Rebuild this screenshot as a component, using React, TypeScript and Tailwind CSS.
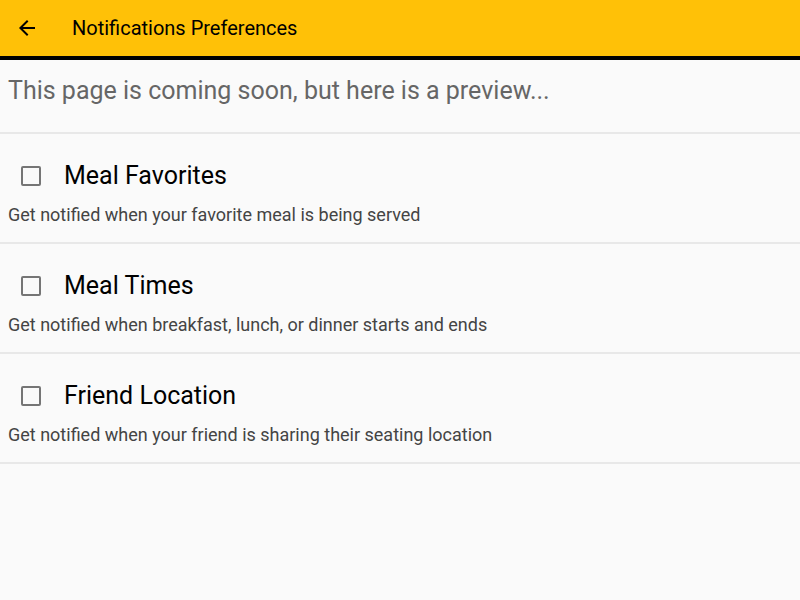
import { MdArrowBack } from 'react-icons/md';

const prefs = [
  { title: 'Meal Favorites', desc: 'Get notified when your favorite meal is being served' },
  { title: 'Meal Times', desc: 'Get notified when breakfast, lunch, or dinner starts and ends' },
  { title: 'Friend Location', desc: 'Get notified when your friend is sharing their seating location' },
];

export default function App() {
  return (
    <div className="w-[800px] h-[600px] bg-[#fafafa] font-['Roboto',sans-serif] overflow-hidden">
      <header className="h-[60px] bg-[#ffc107] border-b-4 border-black flex items-center">
        <button className="w-[56px] h-full flex items-center pl-[15px] text-black">
          <MdArrowBack className="w-[24px] h-[24px]" />
        </button>
        <h1 className="ml-[16px] text-[20px] leading-none text-black font-normal">Notifications Preferences</h1>
      </header>

      <div className="h-[74px] border-b-2 border-[#e8e8e8] flex items-center pl-[8px]">
        <p className="text-[25px] leading-[30px] text-[#666666] pb-[10px]">This page is coming soon, but here is a preview...</p>
      </div>

      {prefs.map((p) => (
        <div key={p.title} className="h-[110px] border-b-2 border-[#e8e8e8] pt-[26px]">
          <label className="flex items-center h-[32px] pl-[21px]">
            <span className="w-[20px] h-[20px] border-2 border-[#757575] rounded-[2px] bg-[#fafafa]" />
            <span className="ml-[23px] text-[25px] leading-[32px] text-black">{p.title}</span>
          </label>
          <p className="mt-[12px] pl-[8px] text-[18px] leading-[22px] text-[#444444]">{p.desc}</p>
        </div>
      ))}
    </div>
  );
}
